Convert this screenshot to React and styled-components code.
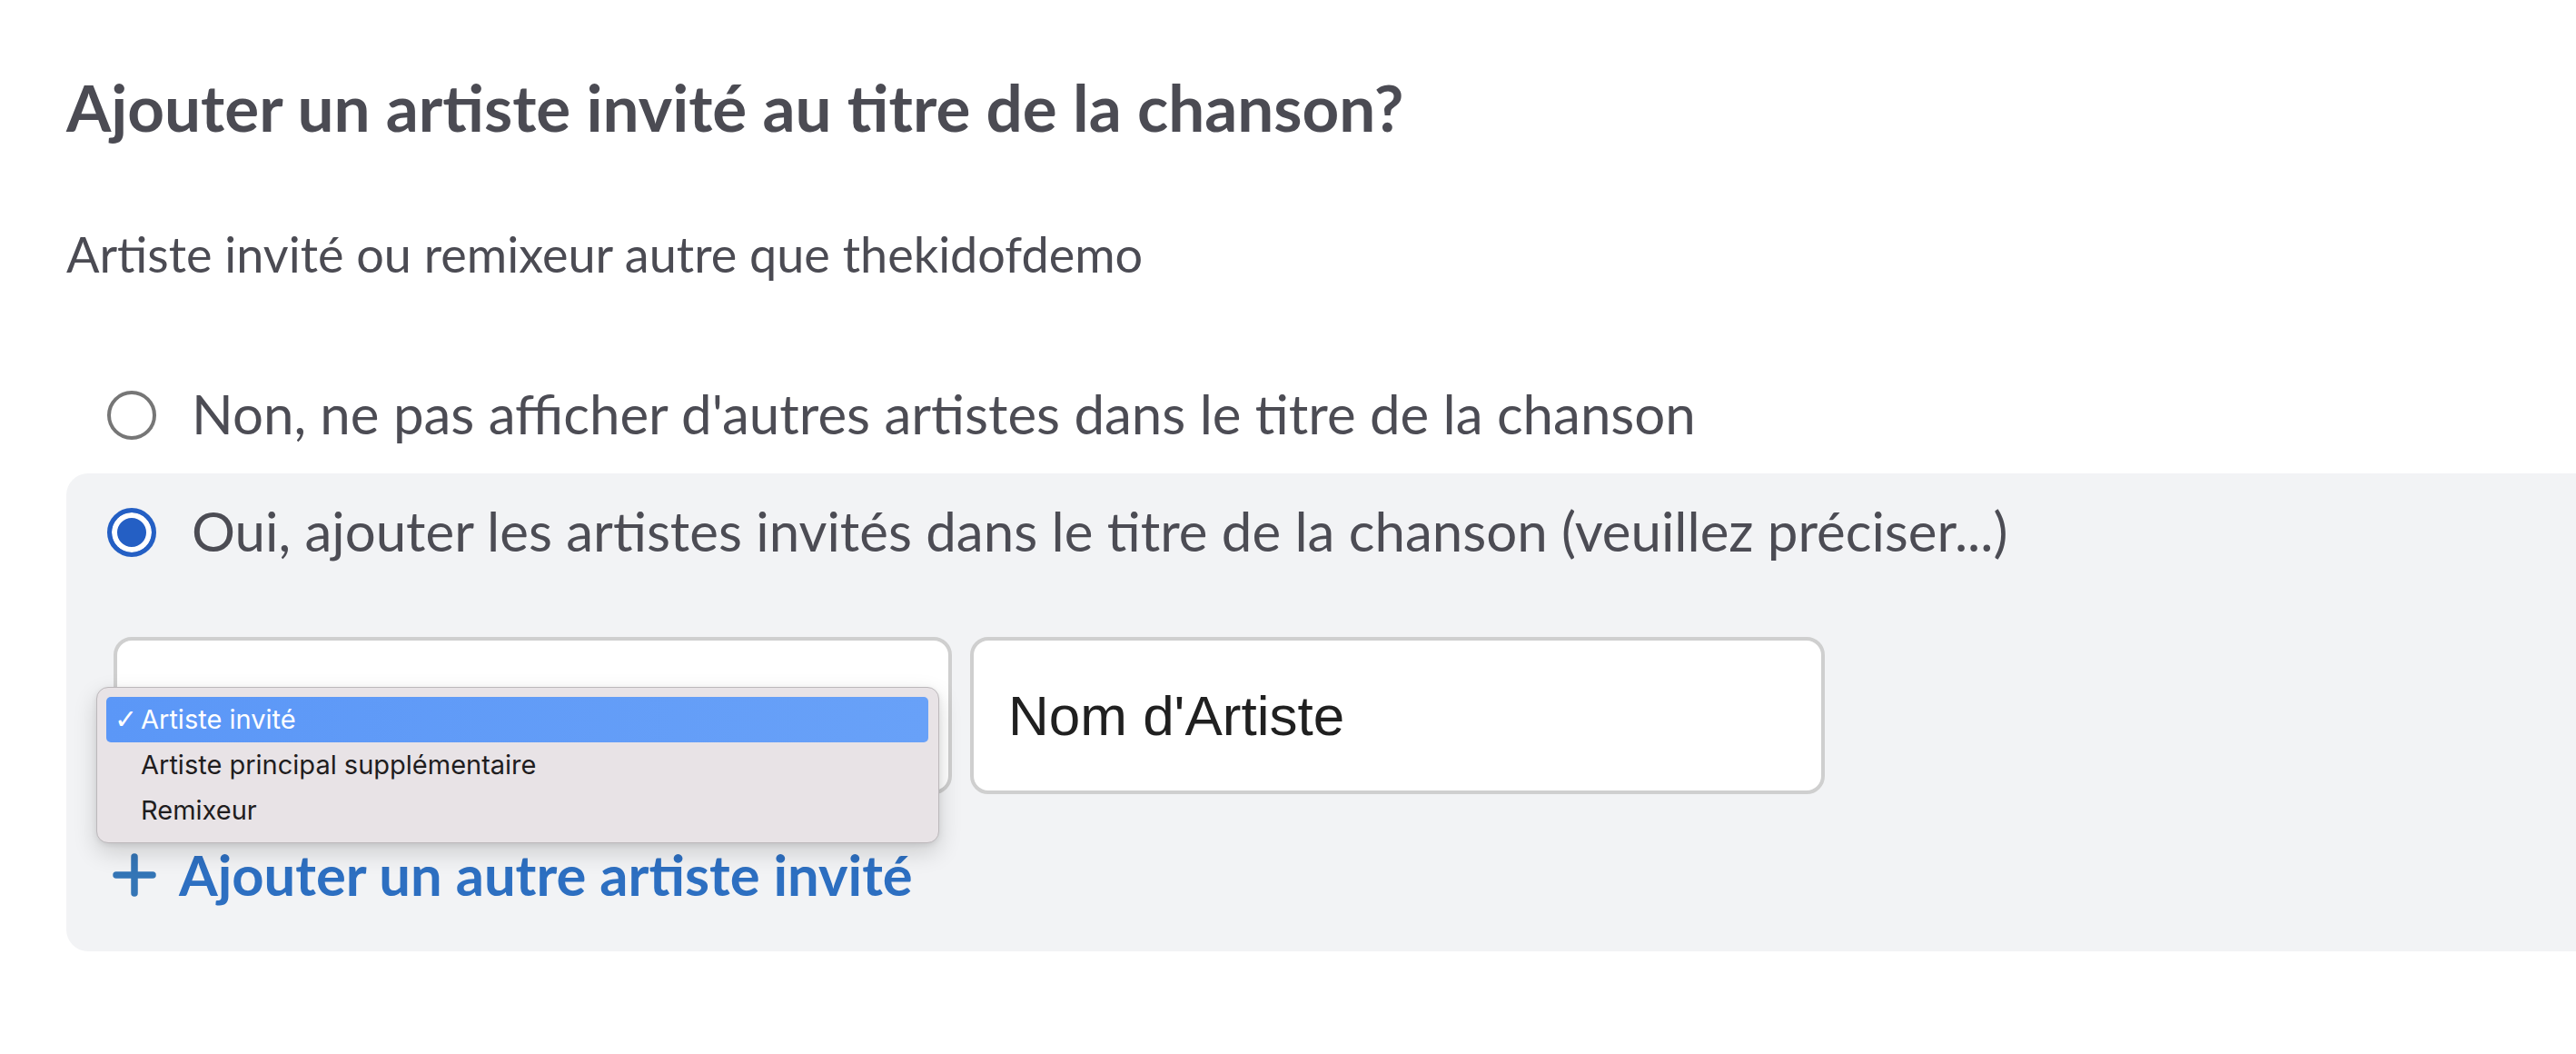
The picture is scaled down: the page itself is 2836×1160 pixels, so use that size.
import React from 'react';
import styled, { createGlobalStyle } from 'styled-components';

const GlobalStyle = createGlobalStyle`
    html, body {
        margin: 0;
        padding: 0;
        background: #ffffff;
    }
    body {
        font-family: Lato, 'Noto Sans', sans-serif;
        color: #4b4b53;
        overflow: hidden;
    }
`;

const options = ['Artiste invité', 'Artiste principal supplémentaire', 'Remixeur'];

const App = () => {
    return (
        <Page>
            <GlobalStyle />
            <Title>Ajouter un artiste invité au titre de la chanson?</Title>
            <Subtitle>Artiste invité ou remixeur autre que thekidofdemo</Subtitle>

            <Choice>
                <Radio />
                <Label>Non, ne pas afficher d'autres artistes dans le titre de la chanson</Label>
            </Choice>

            <Panel>
                <Choice className="inPanel">
                    <Radio checked />
                    <Label>Oui, ajouter les artistes invités dans le titre de la chanson (veuillez préciser...)</Label>
                </Choice>

                <Fields>
                    <SelectBox>
                        <Menu>
                            {options.map((opt, i) => (
                                <MenuItem key={opt} active={i === 0}>
                                    <Check>{i === 0 ? '✓' : ''}</Check>
                                    {opt}
                                </MenuItem>
                            ))}
                        </Menu>
                    </SelectBox>
                    <TextBox>Nom d'Artiste</TextBox>
                </Fields>

                <AddLink href="#">
                    <svg width="48" height="48" viewBox="0 0 48 48">
                        <path
                            d="M24 4 V44 M4 24 H44"
                            stroke="#3475b6"
                            strokeWidth="7.5"
                            strokeLinecap="round"
                            fill="none"
                        />
                    </svg>
                    Ajouter un autre artiste invité
                </AddLink>
            </Panel>
        </Page>
    );
};

const Page = styled.main`
    display: flex;
    flex-direction: column;
    padding: 75px 0 0 73px;
`;

const Title = styled.h1`
    margin: 0;
    font-size: 71px;
    line-height: 86px;
    font-weight: 700;
    color: #4b4b53;
`;

const Subtitle = styled.p`
    margin: 87px 0 0;
    font-size: 54px;
    line-height: 1.2;
    color: #4b4b53;
`;

const Choice = styled.label`
    display: flex;
    align-items: center;
    gap: 39px;
    margin-top: 106px;
    padding-left: 45px;

    &.inPanel {
        margin-top: 0;
        padding-left: 0;
    }
`;

const Radio = styled.span`
    flex: none;
    box-sizing: border-box;
    width: 54px;
    height: 54px;
    border-radius: 50%;
    border: ${(p) => (p.checked ? '5px solid #245fc4' : '4px solid #767676')};
    background: ${(p) => (p.checked ? '#245fc4' : '#ffffff')};
    box-shadow: ${(p) => (p.checked ? 'inset 0 0 0 6px #ffffff' : 'none')};
    margin-top: 4px;
`;

const Label = styled.span`
    font-size: 60px;
    line-height: 1.2;
    color: #4c4c54;
`;

const Panel = styled.section`
    margin-top: 30px;
    background: #f2f3f5;
    border-radius: 24px 0 0 24px;
    padding: 27px 0 49px 45px;
    display: flex;
    flex-direction: column;
`;

const Fields = styled.div`
    display: flex;
    gap: 20px;
    margin: 81px 0 0 7px;
`;

const SelectBox = styled.div`
    position: relative;
    box-sizing: border-box;
    width: 923px;
    height: 173px;
    background: #ffffff;
    border: 4px solid #cfcfcf;
    border-radius: 20px;
`;

const Menu = styled.ul`
    position: absolute;
    left: -23px;
    top: 51px;
    box-sizing: border-box;
    width: 928px;
    margin: 0;
    padding: 10px 11px 10px 10px;
    list-style: none;
    background: #e8e3e6;
    border: 1px solid #bcb8bb;
    border-radius: 13px;
    box-shadow: 0 10px 26px rgba(0, 0, 0, 0.16), 0 2px 6px rgba(0, 0, 0, 0.08);
    z-index: 2;
`;

const MenuItem = styled.li`
    display: flex;
    align-items: center;
    height: 50px;
    padding-left: 9px;
    border-radius: 5px;
    font-family: Inter, 'Liberation Sans', sans-serif;
    font-size: 29px;
    color: ${(p) => (p.active ? '#ffffff' : '#1f1d1e')};
    background: ${(p) => (p.active ? 'linear-gradient(90deg, #5b97f7, #68a1f8)' : 'transparent')};
`;

const Check = styled.span`
    display: inline-block;
    width: 29px;
    font-family: 'DejaVu Sans', sans-serif;
    font-size: 30px;
    font-weight: 700;
`;

const TextBox = styled.div`
    box-sizing: border-box;
    width: 941px;
    height: 173px;
    display: flex;
    align-items: center;
    padding-left: 38px;
    background: #ffffff;
    border: 4px solid #cfcfcf;
    border-radius: 20px;
    font-family: 'Liberation Sans', Arial, sans-serif;
    font-size: 62px;
    color: #202020;
`;

const AddLink = styled.a`
    display: flex;
    align-items: center;
    gap: 25px;
    margin: 52px 0 0 6px;
    font-size: 61.5px;
    line-height: 72px;
    font-weight: 700;
    color: #2d6fc1;
    text-decoration: none;

    svg {
        flex: none;
        margin-top: 2px;
    }
`;

export default App;
